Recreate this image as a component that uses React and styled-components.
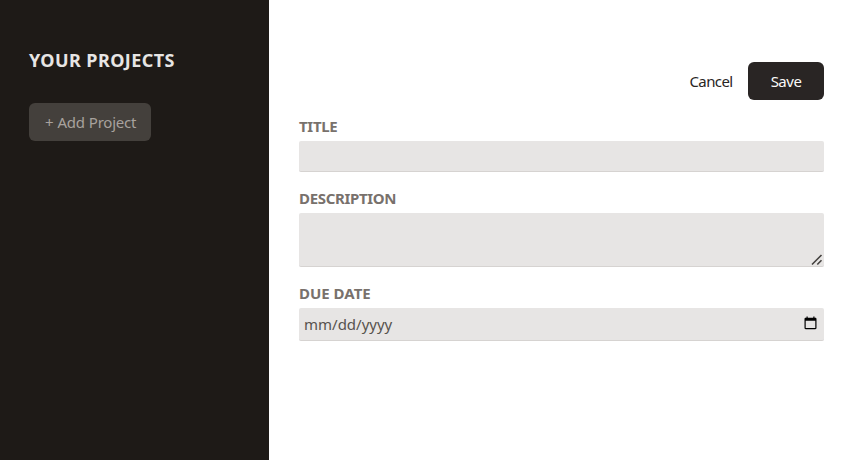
import React from "react";
import styled, { createGlobalStyle } from "styled-components";

const GlobalStyle = createGlobalStyle`
  *, *::before, *::after { box-sizing: border-box; }
  body { margin: 0; background: #fff; }
  body, button, input, textarea {
    font-family: "Noto Sans", "Open Sans", sans-serif;
  }
`;

const Layout = styled.main`
  display: flex;
  height: 460px;
  overflow: hidden;
`;

const Sidebar = styled.aside`
  flex: 0 0 269px;
  padding: 46px 29px;
  background: #1e1a17;
`;

const SidebarTitle = styled.h2`
  margin: 0 0 29px;
  font-size: 18px;
  line-height: 28px;
  font-weight: 700;
  letter-spacing: 0.42px;
  white-space: nowrap;
  color: #e7e5e4;
`;

const AddButton = styled.button`
  width: 122px;
  height: 38px;
  padding: 0 0 0 1px;
  border: 0;
  border-radius: 6px;
  background: #44403c;
  color: #a8a29e;
  font-size: 15px;
  line-height: 22px;
  letter-spacing: -0.25px;
  word-spacing: 0.5px;
  white-space: nowrap;
`;

const Content = styled.section`
  flex: 1;
  padding: 62px 17px 0 30px;
`;

const Actions = styled.menu`
  display: flex;
  justify-content: flex-end;
  gap: 15px;
  margin: 0 0 15px;
  padding: 0;
`;

const ActionButton = styled.button`
  width: ${(p) => (p.$primary ? "76px" : "44px")};
  height: 38px;
  padding: 0;
  border: 0;
  border-radius: 6px;
  background: ${(p) => (p.$primary ? "#292524" : "transparent")};
  color: ${(p) => (p.$primary ? "#fafaf9" : "#292524")};
  font-size: 15px;
  line-height: 22px;
  letter-spacing: ${(p) => (p.$primary ? "-0.5px" : "-0.6px")};
`;

const Field = styled.div`
  display: flex;
  flex-direction: column;
  margin-bottom: 15px;
`;

const Label = styled.label`
  height: 26px;
  font-size: 15px;
  line-height: 22px;
  font-weight: 700;
  letter-spacing: ${(p) => p.$tracking};
  color: #78716c;
`;

const Control = styled.input`
  display: block;
  width: 100%;
  height: ${(p) => p.$height};
  padding: 4px 5px;
  border: 0;
  border-bottom: 1px solid #d6d3d1;
  border-radius: 2px;
  outline: 0;
  resize: none;
  background: #e7e5e4;
  color: #57534e;
  font-size: 15px;
  letter-spacing: 0px;
  &::placeholder { color: #57534e; opacity: 1; }
`;

const ControlFrame = styled.div`
  position: relative;
`;

const ResizeGrip = styled.svg`
  position: absolute;
  right: 1px;
  bottom: 1px;
`;

const CalendarIcon = styled.svg`
  position: absolute;
  right: 7px;
  top: 8px;
`;

export default function App() {
  return (
    <>
      <GlobalStyle />
      <Layout>
        <Sidebar>
          <SidebarTitle>YOUR PROJECTS</SidebarTitle>
          <AddButton>+ Add Project</AddButton>
        </Sidebar>
        <Content>
          <Actions>
            <ActionButton>Cancel</ActionButton>
            <ActionButton $primary>Save</ActionButton>
          </Actions>
          <Field>
            <Label htmlFor="title" $tracking="-0.3px">TITLE</Label>
            <Control id="title" type="text" $height="31px" />
          </Field>
          <Field>
            <Label htmlFor="description" $tracking="-0.33px">DESCRIPTION</Label>
            <ControlFrame>
              <Control as="textarea" id="description" $height="54px" />
              <ResizeGrip width="12" height="12" viewBox="0 0 12 12" fill="none" stroke="#45423f" strokeWidth="1.6">
                <path d="M1 10.5 10.5 1M6.3 10.5 10.5 6.3" />
              </ResizeGrip>
            </ControlFrame>
          </Field>
          <Field>
            <Label htmlFor="due-date" $tracking="0px">DUE DATE</Label>
            <ControlFrame>
              <Control id="due-date" type="text" placeholder="mm/dd/yyyy" $height="33px" />
              <CalendarIcon width="13" height="14" viewBox="0 0 13 14">
                <path d="M2.5 0.5h1.2v1.2h5.6V0.5h1.2v1.2h.8c.7 0 1.2.5 1.2 1.2v9.2c0 .7-.5 1.2-1.2 1.2H1.7c-.7 0-1.2-.5-1.2-1.2V2.9c0-.7.5-1.2 1.2-1.2h.8zM1.7 4.8v7.3h9.6V4.8z" fill="#000" fillRule="evenodd" />
              </CalendarIcon>
            </ControlFrame>
          </Field>
        </Content>
      </Layout>
    </>
  );
}
